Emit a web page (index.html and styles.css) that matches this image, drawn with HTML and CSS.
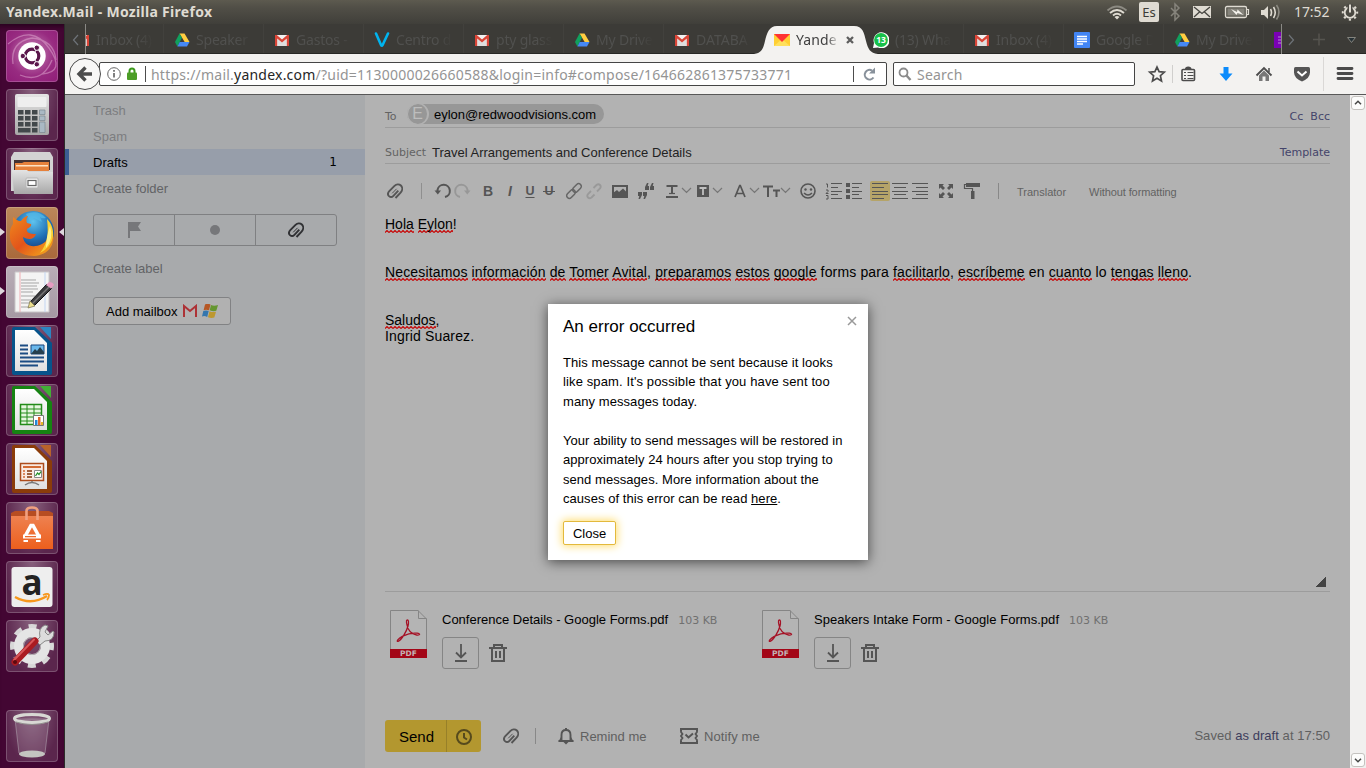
FILE: index.html
```html
<!DOCTYPE html>
<html lang="en">
<head>
<meta charset="utf-8">
<title>Yandex.Mail</title>
<link rel="stylesheet" href="styles.css">
</head>
<body>
<svg class="defs" aria-hidden="true">
  <defs>
    <linearGradient id="gOrange" x1="0" y1="0" x2="0" y2="1"><stop offset="0" stop-color="#ee8150"/><stop offset="1" stop-color="#ed5f1d"/></linearGradient>
    <linearGradient id="gGrey" x1="0" y1="0" x2="0" y2="1"><stop offset="0" stop-color="#e4e4e4"/><stop offset="1" stop-color="#a8a8a8"/></linearGradient>
    <linearGradient id="gPaper" x1="0" y1="0" x2="0" y2="1"><stop offset="0" stop-color="#ffffff"/><stop offset="1" stop-color="#e0e0e0"/></linearGradient>
    <radialGradient id="gGlobe" cx=".5" cy=".25" r=".7"><stop offset="0" stop-color="#5fc3ee"/><stop offset=".6" stop-color="#1f6fb5"/><stop offset="1" stop-color="#173c7c"/></radialGradient>
    <linearGradient id="gFox" x1="0" y1="0" x2="1" y2="1"><stop offset="0" stop-color="#f08a1d"/><stop offset=".5" stop-color="#e2541b"/><stop offset="1" stop-color="#f6b21c"/></linearGradient>
    <symbol id="gmail" viewBox="0 0 16 16"><path d="M1 3h14v11H1z" fill="#f1f1f1"/><path d="M3.500 14V7L8 10.500 12.500 7v7z" fill="#dedede"/><path d="M1 14V3h1.800L8 7.500 13.200 3H15v11h-2.200V6.500L8 10.400 3.200 6.500V14z" fill="#d94537"/></symbol>
    <symbol id="drive" viewBox="0 0 16 16"><path d="M5.500 1.500h5L15.500 10h-4.800z" fill="#ffcd40"/><path d="M5.500 1.500L8 5.800 3.400 14.500 1 10z" fill="#11a05e"/><path d="M5.700 10h9.800L13 14.500H3.400z" fill="#4688f4"/></symbol>
    <symbol id="vee" viewBox="0 0 16 16"><path d="M2 1.500L7 13q.8 1.600 1.600 0L14 1.500" fill="none" stroke="#00b4ef" stroke-width="2.600" stroke-linecap="round"/></symbol>
    <symbol id="ymail" viewBox="0 0 16 16"><path d="M0 2h16v12H0z" fill="#ffcf33"/><path d="M0 14L8 7l8 7z" fill="#ffe05c"/><path d="M0 2h16L8 10z" fill="#f33"/></symbol>
    <symbol id="docs" viewBox="0 0 16 16"><rect width="16" height="16" rx="1" fill="#4285f4"/><path d="M3 4.500h10M3 7h10M3 9.500h10M3 12h6" stroke="#fff" stroke-width="1.300"/></symbol>
    <symbol id="clip" viewBox="0 0 16 16"><path d="M8.500 15L13.600 9.600C15.700 7.300 15.600 4.200 13.900 2.500 12.100.8 9.400 1 7.500 2.900L2.300 8.200C.7 9.900.8 11.900 2 13.100c1.300 1.200 3.200 1 4.400-.3l4.900-5.200" fill="none" stroke="currentColor" stroke-width="1.900"/><path d="M5.200 10.300L9.600 5.800" fill="none" stroke="currentColor" stroke-width="1"/></symbol>
    <symbol id="pdf" viewBox="0 0 37 48"><path d="M.5 40V.5H28l8.500 8.500v31" fill="#b4b4b4" stroke="#858585"/><path d="M28.500.5v8h8" fill="none" stroke="#858585"/><path d="M0 39h37v9H0z" fill="#a30617"/><path d="M17 10c-1.500 1 .2 6 1.200 8.800 2 3.600 4.600 5.600 8.500 6.200 3.600.4 4-1.400.5-1.800-5-.6-9.500.5-14.500 3-5 2.600-6.600 5.600-4.600 5.200 3.400-1.200 8.300-9.500 9.900-15.400.8-3.300.7-6.600-1-6z" fill="none" stroke="#a51226" stroke-width="1.300"/></symbol>
    <symbol id="down" viewBox="0 0 16 20"><path d="M8 1v13M3 9.500l5 5 5-5" fill="none" stroke="#555" stroke-width="1.800"/><path d="M2 18h12" stroke="#555" stroke-width="2"/></symbol>
    <symbol id="bin" viewBox="0 0 18 18"><path d="M0 4h18M5 3.500V1h8v2.500M3 4v13h12V4M7 7v7M11 7v7" fill="none" stroke="#555" stroke-width="2"/></symbol>
  </defs>
</svg>

<header class="panel">
  <div class="panel-title">Yandex.Mail - Mozilla Firefox</div>
  <div class="tray">
    <svg width="34" height="24" viewBox="1104 0 34 24"><g fill="none" stroke-width="1.900"><path d="M1107.500 10.500q9.500-8 19 0" stroke="#8c8a82"/><path d="M1110 13q7-6 14 0M1113 15.500q4-3.500 8 0" stroke="#dfdbd2"/></g><path d="M1114.500 17l2.500 2.500 2.500-2.500q-2.500-2-5 0z" fill="#dfdbd2"/></svg>
    <span class="kbd">Es</span>
    <svg width="135" height="24" viewBox="1159 0 135 24"><path d="M1171 8l8 8-4 4V4l4 4-8 8" fill="none" stroke="#86847c" stroke-width="1.500"/><rect x="1193" y="6" width="18" height="12" fill="#dfdbd2"/><path d="M1194 7l8 6.500 8-6.500M1194 17l5.500-5M1210 17l-5.500-5" fill="none" stroke="#45443f" stroke-width="1.300"/><rect x="1225.500" y="6.500" width="21" height="11" rx="1.500" fill="#5a5851" stroke="#dfdbd2" stroke-width="1.300"/><rect x="1227.500" y="8.500" width="17" height="7" fill="#85837b"/><path d="M1247 9.500h1.500v5h-1.500" fill="none" stroke="#dfdbd2" stroke-width="1.200"/><path d="M1231 9l6 3 .5-2.500 6 5.500-6-2-1 2z" fill="#f4f2ec"/><path d="M1261 10h3l4-4v13l-4-4h-3z" fill="#dfdbd2"/><path d="M1270.500 9q2 3.500 0 7M1273.500 7q3.500 5.500 0 11" fill="none" stroke="#dfdbd2" stroke-width="1.600"/><path d="M1276.500 5q5 7 0 14.500" fill="none" stroke="#8c8a82" stroke-width="1.600"/></svg>
    <span class="clock">17:52</span>
    <svg width="24" height="24" viewBox="1338 0 24 24"><g fill="none" stroke="#dfdbd2"><circle cx="1350" cy="12.500" r="5.300" stroke-width="1.800"/><circle cx="1350" cy="12.500" r="7.200" stroke-width="2" stroke-dasharray="2.200 3.455" stroke-dashoffset="1.100"/></g><path d="M1347.500 4h5v8h-5z" fill="#4b4943"/><path d="M1350 4.500v8" stroke="#dfdbd2" stroke-width="2"/></svg>
  </div>
</header>

<div class="desktop">
<nav class="launcher">
  <div class="tile dash"><svg viewBox="0 0 52 52"><g fill="none" stroke="#e3aed4" stroke-opacity=".5" stroke-width="1.300"><path d="M2 14Q26-6 43 18T36 44M7 34Q4 12 26 8M50 30Q48 10 26 8M14 45Q36 54 46 30"/></g><circle cx="26" cy="26" r="13.700" fill="#fff"/><circle cx="26" cy="26" r="6.800" fill="none" stroke="#5a164b" stroke-width="3.200"/><g stroke="#fff" stroke-width="1"><path d="M15 26h8M32 17l-5 8M32 35l-5-8"/><g fill="#5a164b"><circle cx="16.800" cy="26" r="2.700"/><circle cx="30.800" cy="17.700" r="2.700"/><circle cx="30.800" cy="34.300" r="2.700"/></g></g><circle cx="26" cy="26" r="5" fill="#fff"/></svg></div>
  <div class="tile"><svg viewBox="0 0 52 52"><rect x="9" y="5" width="34" height="41" rx="2" fill="url(#gGrey)"/><rect x="11.500" y="8" width="29" height="10" rx="1" fill="#eee"/><g fill="#42484b"><path d="M12 21h5.500v4.500H12zM19 21h5.500v4.500H19zM26 21h5.500v4.500H26zM12 27h5.500v4.500H12zM19 27h5.500v4.500H19zM26 27h5.500v4.500H26zM12 33h5.500v4.500H12zM19 33h5.500v4.500H19zM26 33h5.500v4.500H26zM12 39h12.500v4.500H12zM26 39h5.500v4.500H26z"/></g><path d="M33.500 21H39v4.500h-5.500zM33.500 27H39v4.500h-5.500zM33.500 33H39v10.500h-5.500z" fill="#aab9c4" stroke="#728089" stroke-width=".6"/></svg></div>
  <div class="tile"><svg viewBox="0 0 52 52"><path d="M8 4h36l3 5v34H5V9z" fill="#d3d3d3"/><path d="M8 12h36v10H8z" fill="#433"/><path d="M9 15h7l2-1h25v9H9z" fill="#e6813b"/><path d="M10 17h32v1.500H10z" fill="#ffe2c4"/><path d="M6 22h15l2 2h24v22H8z" fill="url(#gGrey)"/><rect x="20" y="30" width="12" height="10" rx="1" fill="#f1f1f1" stroke="#b4b4b4"/><rect x="22" y="32.500" width="8" height="5" fill="#fff" stroke="#666" stroke-width="1.200"/></svg></div>
  <div class="tile firefox"><svg viewBox="0 0 52 52"><circle cx="27" cy="25" r="21" fill="url(#gGlobe)"/><path d="M20 7q12-5 20 4-4 1-6-1l2 5-8-4-4 3z" fill="#55bce9" opacity=".7"/><path d="M7 10c3 2 4 4 8 4 4-5 6-5 7-5-2 3-2 5-1 7l4 1c1 2-2 4-4 5-1 3 2 5 9 5-2 6-8 6-13 3 1 8 9 12 19 7 7-4 9-9 7-19 9 12 4 30-15 31C12 49 2 38 4 25c0-4 2-6 3-8z" fill="url(#gFox)"/><path d="M41 12c10 10 8 27-7 34 7-9 9-17 7-34z" fill="#fbd133"/><path d="M44 19q4 12-4 22 0-10 4-22z" fill="#fff08a"/></svg></div>
  <div class="tile pale"><svg viewBox="0 0 52 52"><path d="M9 6h34v40H9z" fill="#f4f4f4" stroke="#c9c6c8"/><path d="M14 6v40" stroke="#f0aeb4"/><path d="M39 6v40" stroke="#c2d5f2"/><path d="M15 14h15M15 17h18M15 20h16M15 23h17M15 26h12M15 30h14M15 34h10M15 37h12M15 41h9" stroke="#a5a5a5"/><path d="M24 36l17-18 4.500 4.500-17 17z" fill="#3a3a3e" stroke="#111"/><path d="M26.500 37.500l17-17" stroke="#777" stroke-width="1.500"/><path d="M24 35l5 5-7 2z" fill="#ecdf8f" stroke="#77704a" stroke-width=".7"/><path d="M40 19l3-3q4 0 5 3l-3 3.500z" fill="#e79cc2"/></svg></div>
  <div class="tile"><svg viewBox="0 0 52 52"><path d="M8 2h21l17 16v30q0 2-2 2H8q-2 0-2-2V4q0-2 2-2z" fill="#07548b"/><path d="M9 5h19l13 13v28H9z" fill="url(#gPaper)"/><path d="M34 2h11v12z" fill="#2c85c0"/><path d="M14 20.500h8M14 24.500h8M14 28.500h8M14 32.500h24M14 36.500h24M14 40.500h18" stroke="#1c4c83" stroke-width="1.900"/><path d="M25 20h13v9H25z" fill="#6ab7ea" stroke="#17447c"/><path d="M25 29l4-5 2 2 3-4 4 5v2z" fill="#263f4e"/></svg></div>
  <div class="tile"><svg viewBox="0 0 52 52"><path d="M8 2h21l17 16v30q0 2-2 2H8q-2 0-2-2V4q0-2 2-2z" fill="#168312"/><path d="M9 5h19l13 13v28H9z" fill="url(#gPaper)"/><path d="M34 2h11v12z" fill="#42af35"/><path d="M14.500 20.500h21v20h-21z" fill="#e7f7df" stroke="#238b18" stroke-width="1.500"/><path d="M14 25h22M14 29h22M14 33h22M14 37h22M21 20v21M28 20v21" stroke="#238b18"/><path d="M27.500 31.500h10v10h-10z" fill="#fff" stroke="#777"/><path d="M29 36h2.500v5H29z" fill="#2586d5"/><path d="M32 33h2.500v8H32z" fill="#e26528"/><path d="M35 38h2v3h-2z" fill="#e9b725"/></svg></div>
  <div class="tile"><svg viewBox="0 0 52 52"><path d="M8 2h21l17 16v30q0 2-2 2H8q-2 0-2-2V4q0-2 2-2z" fill="#8b3c0a"/><path d="M9 5h19l13 13v28H9z" fill="url(#gPaper)"/><path d="M34 2h11v12z" fill="#b9622a"/><rect x="14.500" y="20.500" width="23" height="17" fill="#faeae1" stroke="#ad4c1c" stroke-width="1.500"/><path d="M17 24h18" stroke="#d26b34" stroke-width="2"/><path d="M17 28h2M17 31h2M17 34h2" stroke="#d26b34" stroke-width="1.600"/><path d="M21 28h5M21 31h5M21 34h5" stroke="#833509" stroke-width="1.600"/><path d="M28.500 27.500h7v7h-7z" fill="#fff" stroke="#888"/><path d="M29.500 33l2-3 1.500 1.500 2-3" fill="none" stroke="#249126" stroke-width="1.300"/><path d="M26 38v2M19 42q7-5 14 0" fill="none" stroke="#777" stroke-width="1.500"/></svg></div>
  <div class="tile"><svg viewBox="0 0 52 52"><path d="M5 11l4-2h34l4 2v6H5z" fill="#b74d22"/><path d="M5 14h42v33H5z" fill="url(#gOrange)"/><path d="M20.500 18V9q0-3.500 5.500-3.500t5.500 3.500v9" fill="none" stroke="#f0a080" stroke-width="2.600"/><path d="M19.500 33.500L25 23.500h2l5.500 10" fill="none" stroke="#fff" stroke-width="3.600"/><path d="M17 32.500h18v4H17z" fill="#fff"/><path d="M19 34h11v1.300H19z" fill="#ed6b2d"/><path d="M17.500 38h4.500v2h-4.500zM30 38h4.500v2H30z" fill="#fff"/></svg></div>
  <div class="tile"><svg viewBox="0 0 52 52"><rect x="5.500" y="6" width="41" height="40" rx="3" fill="#eee"/><text x="26" y="33.500" text-anchor="middle" class="amazon">a</text><path d="M9 36q16 9 32-1" fill="none" stroke="#f7981d" stroke-width="2.300"/><path d="M37 34q5-2 6 0 0 3-2 5" fill="none" stroke="#f7981d" stroke-width="1.800"/></svg></div>
  <div class="tile"><svg viewBox="0 0 52 52"><circle cx="26" cy="26" r="19.500" fill="none" stroke="#d8d8d8" stroke-width="5" stroke-dasharray="8 7.315" stroke-dashoffset="4"/><circle cx="26" cy="26" r="13.500" fill="none" stroke="#e5e5e5" stroke-width="9"/><circle cx="26" cy="26" r="8.500" fill="none" stroke="#bbb" stroke-width="1"/><path d="M30 21l4-4q-2-9 5-12l3 1-3 6 3 3 5-4 1 1q0 9-9 9l-5 4z" fill="#dcdcdc" stroke="#888"/><path d="M9 42L29 21" stroke="#aa1b21" stroke-width="7" stroke-linecap="round"/><path d="M8 40L28 19.500" stroke="#d8575a" stroke-width="2" stroke-linecap="round"/><circle cx="9" cy="42" r="2" fill="#5c090f"/></svg></div>
  <div class="tile trash"><svg viewBox="0 0 52 52"><path d="M9 9l4 34q13 6 26 0l4-34z" fill="#fff" fill-opacity=".12" stroke="#ad9eab" stroke-opacity=".6"/><ellipse cx="26" cy="44" rx="13" ry="3.500" fill="#c4c4c0"/><ellipse cx="26" cy="8.500" rx="17.500" ry="4" fill="none" stroke="#d8d8d4" stroke-width="3"/><path d="M10 12q16 5 32 0" fill="none" stroke="#93908f"/></svg></div>
  <svg class="pips" width="64" height="120" viewBox="0 208 64 120"><path d="M0 228l5 4-5 4zM64 228l-5 4 5 4zM0 287l5 4-5 4z" fill="#ddd6dc"/></svg>
</nav>

<main class="browser">
  <div class="tabbar">
    <svg class="tab-prev" viewBox="65 24 20 29"><path d="M78 35l-4.500 5 4.500 5" fill="none" stroke="#6e7378" stroke-width="1.200"/></svg>
    <div class="strip">
      <div class="tab"><svg><use href="#gmail"/></svg><span>Inbox (4)</span></div>
      <div class="tab"><svg><use href="#drive"/></svg><span>Speaker</span></div>
      <div class="tab"><svg><use href="#gmail"/></svg><span>Gastos -</span></div>
      <div class="tab"><svg><use href="#vee"/></svg><span>Centro d</span></div>
      <div class="tab"><svg><use href="#gmail"/></svg><span>pty glass</span></div>
      <div class="tab"><svg><use href="#drive"/></svg><span>My Drive</span></div>
      <div class="tab"><svg><use href="#gmail"/></svg><span class="caps">DATABA</span></div>
      <div class="tab active"><svg class="shape" viewBox="754 26 124 28"><path d="M754 54c8-1 9-5 11-13s4-15 12-15h77c9 0 10 7 12 15s4 12 12 13z" fill="#f3f2f0"/></svg><svg><use href="#ymail"/></svg><span>Yande</span><svg class="x" viewBox="0 0 8 8"><path d="M1 1l6 6M7 1L1 7" stroke="#5e5e5e" stroke-width="2.300"/></svg></div>
      <div class="tab wa"><svg viewBox="0 0 16 16"><path d="M0 16l1-5A8 8 0 1 1 5 15.500z" fill="#fff"/><circle cx="8" cy="8" r="6.900" fill="#17c04a"/><text x="8" y="11" text-anchor="middle" class="badge">13</text></svg><span>(13) Wha</span></div>
      <div class="tab"><svg><use href="#gmail"/></svg><span>Inbox (4)</span></div>
      <div class="tab"><svg><use href="#docs"/></svg><span>Google D</span></div>
      <div class="tab"><svg><use href="#drive"/></svg><span>My Drive</span></div>
      <div class="tab"><svg viewBox="0 0 16 16"><path d="M0 0h16v16H0z" fill="#7a00b5"/><path d="M4 5h8M4 8h8M4 11h8" stroke="#b98ad4"/></svg></div>
    </div>
    <svg class="tab-next" viewBox="1282 24 84 29"><path d="M1289 35l4.500 5-4.500 5" fill="none" stroke="#6e7378" stroke-width="1.200"/><path d="M1313 39.500h12M1319 33.500v12" stroke="#55544f" stroke-width="1.500"/><path d="M1347.500 37.500h8l-4 5z" fill="#263136" stroke="#84847e"/></svg>
  </div>

  <div class="toolbar">
    <svg class="back" viewBox="67 56 36 36"><circle cx="85" cy="74" r="15.500" fill="#f8f7f6" stroke="#4b4b4b"/><path d="M92 74H80M85.500 67.500L79 74l6.500 6.500" fill="none" stroke="#4c4c4c" stroke-width="3.400"/></svg>
    <div class="url">
      <svg width="51" height="22" viewBox="100 63 51 22"><circle cx="114" cy="74" r="6.300" fill="none" stroke="#666"/><path d="M114 73v4.500M114 70v1.700" stroke="#555" stroke-width="1.500"/><path d="M129.500 73v-2q0-2.500 2.500-2.500t2.500 2.500v2" fill="none" stroke="#3d9a1c" stroke-width="2"/><rect x="127" y="72.500" width="10" height="7.500" rx="1" fill="#4c9d26"/><path d="M145.500 66v16" stroke="#4d4d4d"/></svg>
      <span class="address">https://mail.<b>yandex.com</b>/?uid=1130000026660588&amp;login=info#compose/164662861375733771</span>
      <svg class="reload" width="34" height="22" viewBox="852 63 34 22"><path d="M853.500 66v16" stroke="#4d4d4d"/><path d="M873.500 77.500A4.800 4.800 0 1 1 872 70.500" fill="none" stroke="#88919b" stroke-width="2"/><path d="M875 67.500v6h-6z" fill="#88919b"/></svg>
    </div>
    <div class="search"><svg width="23" height="22" viewBox="893 63 23 22"><circle cx="902.500" cy="72.500" r="4" fill="none" stroke="#8b8b8b" stroke-width="1.800"/><path d="M905.500 75.500l4 4.500" stroke="#8b8b8b" stroke-width="2.400"/></svg><span>Search</span></div>
    <svg width="231" height="40" viewBox="1135 54 231 40"><path d="M1157 67l2.100 4.700 5.200.5-3.900 3.500 1.100 5.200-4.500-2.700-4.500 2.700 1.100-5.200-3.900-3.500 5.200-.5z" fill="none" stroke="#4c4c4c" stroke-width="1.700"/><path d="M1172.500 65v18" stroke="#d0cfcd"/><rect x="1182" y="69.500" width="12.500" height="11" rx="1" fill="none" stroke="#4c4c4c" stroke-width="1.600"/><path d="M1185 69q0-2.500 3.200-2.500t3.300 2.500z" fill="#4c4c4c"/><path d="M1184 72.500h2M1187.500 72.500h6M1184 75.500h2M1187.500 75.500h6M1184 78.500h2M1187.500 78.500h6" stroke="#4c4c4c" stroke-width="1"/><path d="M1223.500 67h5v6.500h4L1226 81l-6.500-7.500h4z" fill="#0b8bfb"/><path d="M1256.500 75.500l7.500-7.500 7.500 7.500" fill="none" stroke="#4c4c4c" stroke-width="1.900"/><path d="M1259 75.500l5-5 5 5V81h-3.500v-4.500h-3V81h-3.500z" fill="#777"/><path d="M1269 68v4" stroke="#4c4c4c" stroke-width="1.500"/><path d="M1295.500 67h13q1.500 0 1.500 1.500v4q0 5.500-8 9-8-3.500-8-9v-4q0-1.500 1.500-1.500z" fill="#555"/><path d="M1297.500 71.500l4.500 4 4.500-4" fill="none" stroke="#fff" stroke-width="2"/><path d="M1323.500 57v34" stroke="#dad8d6"/><path d="M1338 68.500h14M1338 73.500h14M1338 78.500h14" stroke="#4b4b4b" stroke-width="2.800" stroke-linecap="round"/></svg>
  </div>

  <div class="page">
    <aside class="sidebar">
      <div class="folder dim">Trash</div>
      <div class="folder dim">Spam</div>
      <div class="folder current"><span>Drafts</span><span class="count">1</span></div>
      <div class="folder">Create folder</div>
      <div class="filters">
        <span><svg width="14" height="18" viewBox="0 0 14 18"><path d="M1 1h13l-3 4.500 3 4.500H3v7H1z" fill="#76777a"/></svg></span>
        <span><i class="dot"></i></span>
        <span><svg class="clip dark" width="16" height="16"><use href="#clip"/></svg></span>
      </div>
      <div class="label">Create label</div>
      <button class="add">Add mailbox
        <svg width="14" height="14" viewBox="0 0 14 14"><path d="M.5 1.500h13v11H.5z" fill="#b5b1b1"/><path d="M1 13V2l6 5 6-5v11" fill="none" stroke="#ad3236" stroke-width="2"/></svg>
        <svg width="16" height="14" viewBox="0 0 16 14"><path d="M3 .5q2.500-1.500 5.500 0L7 6.200Q4 5.200 1.600 6.200z" fill="#b65724"/><path d="M9 1q3 1.500 7 0L14.300 6.800q-3 1-6.600-.5z" fill="#659630"/><path d="M1.300 7q2.700-1 5.400 0l-1.500 6Q2.500 11.500 0 12.500z" fill="#3476ae"/><path d="M7.500 7.200q3 1.500 6.500.5L12.300 13.500q-3 1-6.300-.3z" fill="#bd982f"/></svg>
      </button>
    </aside>

    <section class="compose">
      <div class="row to"><span class="cap">To</span><span class="pill"><i>E</i><span>eylon@redwoodvisions.com</span></span><span class="right"><a>Cc</a><a>Bcc</a></span></div>
      <div class="row subject"><span class="cap">Subject</span><span class="value">Travel Arrangements and Conference Details</span><span class="right"><a>Template</a></span></div>

      <div class="format">
        <svg class="clip first" width="16" height="16"><use href="#clip"/></svg>
        <svg width="74" height="24" viewBox="403 179 74 24"><path d="M421.500 183v16" stroke="#8f8f8f"/><path d="M437.500 191v-1a6.200 6.200 0 1 1 7.500 7" fill="none" stroke="#555" stroke-width="2"/><path d="M434.500 190.500h6.500l-3.200 4z" fill="#555"/><g opacity=".28"><path d="M467.500 191v-1a6.200 6.200 0 1 0-7.500 7" fill="none" stroke="#555" stroke-width="2"/><path d="M464 190.500h6.500l-3.200 4z" fill="#555"/></g></svg>
        <span class="fmt b">B</span><span class="fmt i">I</span><span class="fmt u">U</span><span class="fmt s"><span>U</span></span>
        <svg width="99" height="24" viewBox="561 179 99 24"><g fill="none" stroke="#666" stroke-width="1.500"><rect x="-5" y="-2.700" width="10" height="5.400" rx="2.700" transform="translate(577 188) rotate(-45)"/><rect x="-5" y="-2.700" width="10" height="5.400" rx="2.700" transform="translate(571 194) rotate(-45)"/></g><g fill="none" stroke="#999" stroke-width="1.800"><path d="M593.500 188l3-3q2-1.500 3.500 0t0 3.500l-3 3M591 191l-3 3q-1.500 2 0 3.500t3.500 0l3-3"/></g><rect x="613" y="186" width="14" height="11" fill="none" stroke="#555" stroke-width="2"/><path d="M613 196v-3l4-3 2 2 4-3.500 4 4v3.500z" fill="#555"/><path d="M638 192h4v3l-2 4h-1.500l.8-3H638zM643 192h4v3l-2 4h-1.500l.8-3H643zM649 190h-4v-3l2-4h1.500l-.8 3h1.300zM654 190h-4v-3l2-4h1.500l-.8 3h1.300z" fill="#555"/></svg>
        <svg width="132" height="24" viewBox="660 179 132 24"><g fill="none" stroke="#555"><path d="M666.500 186h11M672 186v8M666 197h12" stroke-width="2"/><path d="M669 193.500h6" stroke-width="1.200"/><g stroke="#777" stroke-width="1.200"><path d="M682 188l4.500 4.500 4.500-4.500M713 188l4.500 4.500 4.500-4.500M750 188l4.500 4.500 4.500-4.500M781 188l4.500 4.500 4.500-4.500"/></g></g><rect x="697" y="185" width="12" height="12" fill="#555"/><path d="M699.500 188h7M703 188v7" stroke="#c0c0c0" stroke-width="1.800"/><path d="M735 197l4.700-11.500h.6L745 197M737 193.500h6" fill="none" stroke="#555" stroke-width="1.700"/><path d="M763 186.500h10M768 186v11M773 190.500h7M776.500 190v7" fill="none" stroke="#555" stroke-width="2"/></svg>
        <svg width="144" height="24" viewBox="792 179 144 24"><circle cx="808" cy="191" r="7" fill="none" stroke="#555" stroke-width="1.600"/><circle cx="805.500" cy="189.500" r="1.200" fill="#555"/><circle cx="811" cy="189.500" r="1.200" fill="#555"/><path d="M804 193q4 4 8 0" fill="none" stroke="#555" stroke-width="1.500"/><path d="M826 184h1.500v3.500M826 190h2v1.500l-2 2h2.500M826 195.500h2v3.500h-2" fill="none" stroke="#555" stroke-width="1"/><path d="M831 183.500h11M831 187.500h7M831 191.500h11M831 194.500h7M831 198.500h11M852 183.500h10M852 187.500h7M852 191.500h10M852 194.500h7M852 198.500h10" stroke="#555" stroke-width="1"/><path d="M846 183h4v4h-4zM846 189h4v4h-4zM846 195h4v4h-4z" fill="#555"/><rect x="870" y="181" width="20" height="20" rx="2" fill="#b5a469"/><path d="M872 183.500h16M872 187.500h12M872 191.500h16M872 194.500h16M872 198.500h12M892 183.500h16M894 187.500h12M892 191.500h16M894 194.500h12M892 198.500h16M912 183.500h16M916 187.500h12M912 191.500h16M916 194.500h12M912 198.500h16" stroke="#555" stroke-width="1"/></svg>
        <svg width="68" height="24" viewBox="936 179 68 24"><path d="M939 184h5l-1.500 1.500 2.500 2.500-2 2-2.500-2.500-1.500 1.500zM953 184h-5l1.500 1.500-2.500 2.500 2 2 2.500-2.500 1.500 1.500zM939 198h5l-1.500-1.500 2.500-2.500-2-2-2.500 2.500-1.500-1.500zM953 198h-5l1.500-1.500-2.500-2.500 2-2 2.500 2.500 1.500-1.500z" fill="#555"/><path d="M966 183h14v4h-14zM971 191h3.500v8H971z" fill="#555"/><path d="M966 184.500h-1.500v4h8v3" fill="none" stroke="#555" stroke-width="1.200"/><path d="M998.500 183v16" stroke="#888"/></svg>
        <span class="cmd t1">Translator</span><span class="cmd t2">Without formatting</span>
      </div>

      <div class="editor">
        <p><u>Hola</u> <u>Eylon</u>!</p><p></p><p></p>
        <p class="long"><u>Necesitamos</u> <u>información</u> <u>de</u> <u>Tomer</u> <u>Avital</u>, <u>preparamos</u> <u>estos</u> <u>google</u> forms para <u>facilitarlo</u>, <u>escríbeme</u> en <u>cuanto</u> lo <u>tengas</u> <u>lleno</u>.</p><p></p><p></p>
        <p><u>Saludos</u>,</p>
        <p class="sign">Ingrid Suarez.</p>
        <i class="grip"></i>
      </div>

      <div class="files">
        <div class="file"><div class="doc"><svg width="37" height="48"><use href="#pdf"/></svg><b>PDF</b></div><div class="info"><div class="name"><span>Conference Details - Google Forms.pdf</span><small>103 KB</small></div><div class="acts"><span class="dl"><svg width="16" height="20"><use href="#down"/></svg></span><svg width="18" height="18"><use href="#bin"/></svg></div></div></div>
        <div class="file"><div class="doc"><svg width="37" height="48"><use href="#pdf"/></svg><b>PDF</b></div><div class="info"><div class="name"><span class="f2">Speakers Intake Form - Google Forms.pdf</span><small>103 KB</small></div><div class="acts"><span class="dl"><svg width="16" height="20"><use href="#down"/></svg></span><svg width="18" height="18"><use href="#bin"/></svg></div></div></div>
      </div>

      <div class="actions">
        <div class="send"><span>Send</span><svg width="34" height="32" viewBox="447 720 34 32"><circle cx="464" cy="737" r="7" fill="none" stroke="#564a1d" stroke-width="2"/><path d="M464 733v4.500l3 2" fill="none" stroke="#564a1d" stroke-width="2"/></svg></div>
        <svg class="clip attach" width="16" height="16"><use href="#clip"/></svg>
        <svg width="61" height="24" viewBox="519 724 61 24"><path d="M535.500 728v16" stroke="#888"/><path d="M558.500 741h15M561.500 740.500v-5.500q0-5 4.500-5t4.500 5v5.500" fill="none" stroke="#555" stroke-width="1.900"/><path d="M565 728h2v2h-2zM563.500 742h5l-2.500 2.500zM561 737l-2.500 4.500h2.500zM571 737l2.500 4.500H571z" fill="#555"/></svg>
        <span class="txt remind">Remind me</span>
        <svg class="notify" width="18" height="16" viewBox="0 0 18 16"><path d="M1 3V1h16v2M1 13v2h16v-2" fill="none" stroke="#555" stroke-width="2"/><path d="M1 2v2l1.500 2L1 8l1.500 2L1 12v2M17 2v2l-1.500 2L17 8l-1.500 2 1.500 2v2" fill="none" stroke="#555" stroke-width="1.800"/><path d="M5.500 6.500l3 3 4.500-4" fill="none" stroke="#555" stroke-width="2"/></svg>
        <span class="txt notice">Notify me</span>
        <span class="saved">Saved <a>as draft</a> at 17:50</span>
      </div>
    </section>

    <div class="scroll"><span><svg viewBox="0 0 14 14"><path d="M3.500 8.500L7 5l3.500 3.500" fill="none" stroke="#484848" stroke-width="1.800"/></svg></span><span><svg viewBox="0 0 14 14"><path d="M3.500 5.500L7 9l3.500-3.500" fill="none" stroke="#484848" stroke-width="1.800"/></svg></span></div>
  </div>
</main>
</div>

<div class="modal" role="dialog">
  <div class="modal-head"><h1>An error occurred</h1><svg width="10" height="10" viewBox="0 0 10 10"><path d="M1 1l8 8M9 1L1 9" stroke="#999" stroke-width="1.500"/></svg></div>
  <p>This message cannot be sent because it looks<br><span class="wide">like spam. It's possible that you have sent too</span><br>many messages today.</p>
  <p>Your ability to send messages will be restored in<br>approximately 24 hours after you stop trying to<br>send messages. More information about the<br>causes of this error can be read <a>here</a>.</p>
  <button>Close</button>
</div>
</body>
</html>
```
FILE: styles.css
```css
* { box-sizing: border-box; }
body { margin: 0; width: 1366px; height: 768px; overflow: hidden; position: relative; font-family: "Liberation Sans", Arial, sans-serif; font-size: 13px; color: #000; background: #b2b2b2; }
svg { display: block; flex: none; }
.defs { position: absolute; width: 0; height: 0; }
p, h1 { margin: 0; }
a { text-decoration: none; }

.panel { height: 24px; display: flex; justify-content: space-between; background: linear-gradient(#5d5a4f, #514f47 30%, #403f3a); font-family: "Noto Sans", sans-serif; color: #dfdbd2; }
.panel-title { padding-left: 6px; line-height: 23px; font-size: 14px; font-weight: 700; letter-spacing: .3px; white-space: nowrap; }
.tray { display: flex; align-items: center; width: 262px; }
.kbd { width: 20px; height: 20px; margin-left: 1px; border-radius: 2px; background: #dfdbd2; color: #3c3b37; font-size: 13px; line-height: 20px; text-align: center; flex: none; }
.clock { width: 44px; font-size: 14px; line-height: 22px; padding-bottom: 1px; letter-spacing: -.1px; flex: none; }

.desktop { display: flex; height: 744px; }
.launcher { width: 65px; flex: none; padding: 6px 0 0 6px; background: #430633; border-right: 1px solid #2c2c2a; display: flex; flex-direction: column; gap: 7px; position: relative; box-shadow: inset 0 6px 5px -4px #26031c; }
.tile { width: 52px; height: 52px; flex: none; border-radius: 4px; background: radial-gradient(ellipse at 50% 0, rgba(255,255,255,.36), rgba(255,255,255,.13) 75%); box-shadow: inset 0 0 0 1px rgba(255,255,255,.2); }
.tile svg { width: 52px; height: 52px; overflow: visible; }
.tile.dash { background: radial-gradient(circle at 50% 45%, #c887b8, #982b81 60%, #8f1d77); }
.tile.firefox { background: linear-gradient(#bb875a, #a9693b); }
.tile.pale { background: linear-gradient(#b9adb7, #a598a3); }
.tile.trash { margin-top: 31px; }
.amazon { font: bold 35px "Open Sans", sans-serif; fill: #222; }
.pips { position: absolute; left: 0; top: 184px; }

.browser { flex: 1; min-width: 0; display: flex; flex-direction: column; font-family: "Noto Sans", sans-serif; }
.tabbar { height: 30px; display: flex; background: #3c3b37; border-bottom: 1px solid #282825; }
.tab-prev { width: 20px; height: 29px; }
.tab-next { width: 84px; height: 29px; }
.strip { width: 1197px; height: 30px; flex: none; display: flex; overflow: hidden; border-left: 1px solid #8a8985; border-right: 1px solid #8a8985; }
.tab { width: 100px; height: 29px; flex: none; padding: 2px 8px 0 10px; display: flex; align-items: center; gap: 6px; border-left: 1px solid #42413d; color: #50504e; font-size: 14px; position: relative; }
.tab:first-child { margin-left: -23px; }
.tab > svg { width: 16px; height: 16px; }
.tab span { width: 59px; flex: none; white-space: nowrap; line-height: 24px; letter-spacing: -.2px; -webkit-mask-image: linear-gradient(90deg, #000 70%, transparent 98%); mask-image: linear-gradient(90deg, #000 70%, transparent 98%); }
.tab .caps { letter-spacing: 0; }
.tab.active { border: 0; padding-left: 11px; color: #3e3e3e; z-index: 1; height: 30px; }
.tab.active > .shape { position: absolute; left: -9px; top: 2px; width: 124px; height: 28px; z-index: -1; }
.tab.active span { width: 44px; letter-spacing: .1px; }
.tab > svg.x { width: 8px; height: 8px; }
.tab.wa { border: 0; }
.badge { font: bold 8.500px "Noto Sans", sans-serif; fill: #fff; }

.toolbar { height: 41px; flex: none; display: flex; align-items: center; background: #f3f2f0; border-bottom: 1px solid #585858; }
.back { width: 36px; height: 36px; margin-left: 2px; position: relative; z-index: 1; }
.url { width: 788px; height: 24px; margin-left: -4px; display: flex; align-items: center; border: 1px solid #454545; border-radius: 2px; background: #fff; }
.address { color: #949494; font-size: 14px; letter-spacing: .22px; line-height: 22px; padding-top: 1px; white-space: nowrap; }
.address b { font-weight: 400; color: #262626; }
.reload { margin-left: auto; }
.search { width: 242px; height: 24px; margin-left: 6px; display: flex; align-items: center; border: 1px solid #454545; border-radius: 2px; background: #fff; color: #949494; font-size: 14px; letter-spacing: .2px; }

.page { flex: 1; min-height: 0; display: flex; font-family: "Liberation Sans", Arial, sans-serif; }
.sidebar { width: 300px; flex: none; padding-top: 2px; background: #a8aaac; color: #626366; }
.folder { height: 26px; padding: 0 28px; line-height: 27px; display: flex; justify-content: space-between; }
.folder.dim { color: #7c7d80; }
.folder.current { border-left: 4px solid #3b5d93; padding-left: 24px; background: #979eaa; color: #000; }
.count { font: 12px/26px "DejaVu Sans", sans-serif; }
.filters { display: flex; width: 244px; height: 32px; margin: 13px 0 0 28px; border: 1px solid #7f8082; border-radius: 3px; }
.filters > span { flex: 1; display: flex; align-items: center; justify-content: center; }
.filters > span + span { border-left: 1px solid #7f8082; }
.dot { width: 10px; height: 10px; border-radius: 50%; background: #76777a; }
.clip { color: #555; }
.clip.dark { color: #303134; }
.label { padding-left: 28px; margin-top: 14px; line-height: 17px; letter-spacing: -.05px; }
.add { display: flex; align-items: center; gap: 5px; width: 138px; height: 28px; margin: 20px 0 0 28px; padding: 0 0 0 12px; border: 1px solid #818284; border-radius: 3px; background: #b1b1b1; font: 13px "Liberation Sans", sans-serif; color: #000; white-space: nowrap; }

.compose { flex: 1; min-width: 0; padding: 0 20px; background: #b2b2b2; display: flex; flex-direction: column; }
.row { display: flex; align-items: center; border-bottom: 1px solid #9c9c9c; flex: none; }
.row.to { height: 33px; padding-top: 6px; }
.row.subject { height: 36px; padding-top: 13px; }
.cap { font: 11px "DejaVu Sans", sans-serif; color: #636363; width: 22px; }
.to .cap, .to .right { padding-top: 4px; }
.subject .cap { width: 47px; }
.pill { height: 20px; width: 197px; border-radius: 10px; background: #979797; display: flex; align-items: center; line-height: 20px; white-space: nowrap; }
.pill > span { padding-top: 1px; }
.pill i { width: 22px; height: 22px; margin: 0 5px 0 0; border: 1px solid #b2b2b2; border-width: 1px 2px 1px 1px; border-radius: 50%; font-style: normal; color: #bdbdbd; font-size: 16px; text-align: center; line-height: 20px; flex: none; }
.value { color: #222; }
.right { margin-left: auto; display: flex; gap: 7px; font: 11px "DejaVu Sans", sans-serif; color: #44446a; }

.format { height: 51px; flex: none; display: flex; align-items: center; padding-top: 2px; }
.format .first { margin-left: 2px; }
.fmt { width: 20px; font-size: 14px; line-height: 20px; text-align: center; color: #555; font-weight: 700; }
.fmt.b { width: 22px; }
.fmt.i { width: 22px; font-style: italic; }
.fmt.u { width: 18px; font-size: 12.500px; text-decoration: underline; text-underline-offset: 2px; }
.fmt.s { width: 20px; margin-right: 2px; font-size: 12.500px; }
.fmt.s span { padding: 0 1.500px; background: linear-gradient(#555, #555) center 55% / 100% 1px no-repeat; }
.cmd { font-size: 11px; color: #626262; white-space: nowrap; padding-top: 2px; }
.t1 { margin-left: 13px; }
.t2 { margin-left: 23px; letter-spacing: -.1px; }

.editor { height: 377px; flex: none; padding-top: 1px; border-bottom: 1px solid #9c9c9c; font-size: 14px; line-height: 16px; position: relative; }
.editor p { height: 16px; white-space: nowrap; }
.editor .long { letter-spacing: .147px; }
.editor .sign { letter-spacing: .15px; }
.editor u { text-decoration: none; padding-bottom: 1px; background: url("data:image/svg+xml,%3Csvg xmlns='http://www.w3.org/2000/svg' width='4' height='3'%3E%3Cpath d='M0 2.500L2 .5 4 2.500' fill='none' stroke='%23c80000' stroke-width='1.100'/%3E%3C/svg%3E") left bottom repeat-x; }
.grip { position: absolute; right: 4px; bottom: 4px; width: 10px; height: 10px; background: linear-gradient(135deg, transparent 50%, #444 50%); }

.files { display: flex; padding: 18px 0 0 5px; height: 128px; flex: none; }
.file { width: 372px; display: flex; gap: 15px; }
.doc { width: 37px; position: relative; }
.doc b { position: absolute; left: 0; top: 39px; width: 37px; text-align: center; color: #c2b2b4; font: bold 7.500px/9px "DejaVu Sans", sans-serif; }
.name { display: flex; gap: 10px; line-height: 20px; white-space: nowrap; }
.name .f2 { letter-spacing: .04px; }
.name small { font: 11px/21px "DejaVu Sans", sans-serif; color: #707070; }
.acts { display: flex; align-items: center; gap: 10px; margin-top: 6px; }
.dl { width: 37px; height: 32px; border: 1px solid #858585; border-radius: 3px; display: flex; align-items: center; justify-content: center; }

.actions { display: flex; align-items: center; height: 32px; color: #606060; }
.send { width: 96px; height: 32px; display: flex; border-radius: 3px; background: #b3972f; color: #000; font-size: 15px; line-height: 33px; }
.send span { width: 62px; padding-left: 14px; border-right: 1px solid #978029; }
.attach { margin-left: 22px; }
.txt { white-space: nowrap; }
.remind { width: 100px; }
.notice { letter-spacing: .1px; }
.notify { margin-right: 6px; }
.saved { margin-left: auto; padding-bottom: 1px; letter-spacing: .05px; }
.saved a { color: #3d3d5c; }

.scroll { width: 16px; background: #f1f0ef; display: flex; flex-direction: column; justify-content: space-between; padding: 1px; }
.scroll span { width: 14px; height: 14px; border: 1px solid #c4c2bf; border-radius: 3px; background: #fcfcfb; }
.scroll svg { width: 12px; height: 12px; }

.modal { position: absolute; left: 548px; top: 304px; width: 320px; height: 256px; padding: 13px 15px; background: #fff; box-shadow: 0 2px 12px rgba(0,0,0,.6); }
.modal-head { display: flex; justify-content: space-between; margin-bottom: 26px; height: 20px; margin-right: -4px; }
.modal-head svg { margin-top: -1px; }
.modal h1 { font-size: 17px; font-weight: 400; line-height: 20px; }
.modal p { line-height: 19.500px; white-space: nowrap; letter-spacing: .07px; margin: -10.300px 0 30px; }
.modal p + p { margin-bottom: 12.100px; letter-spacing: .05px; }
.modal .wide { letter-spacing: .12px; }
.modal a { text-decoration: underline; }
.modal button { width: 53px; height: 24px; padding: 0; border: 1px solid #e3b93c; border-radius: 2px; background: #fff; box-shadow: 0 0 8px 1px #ffdc6b; font: 13px "Liberation Sans", sans-serif; color: #000; display: block; }
```
